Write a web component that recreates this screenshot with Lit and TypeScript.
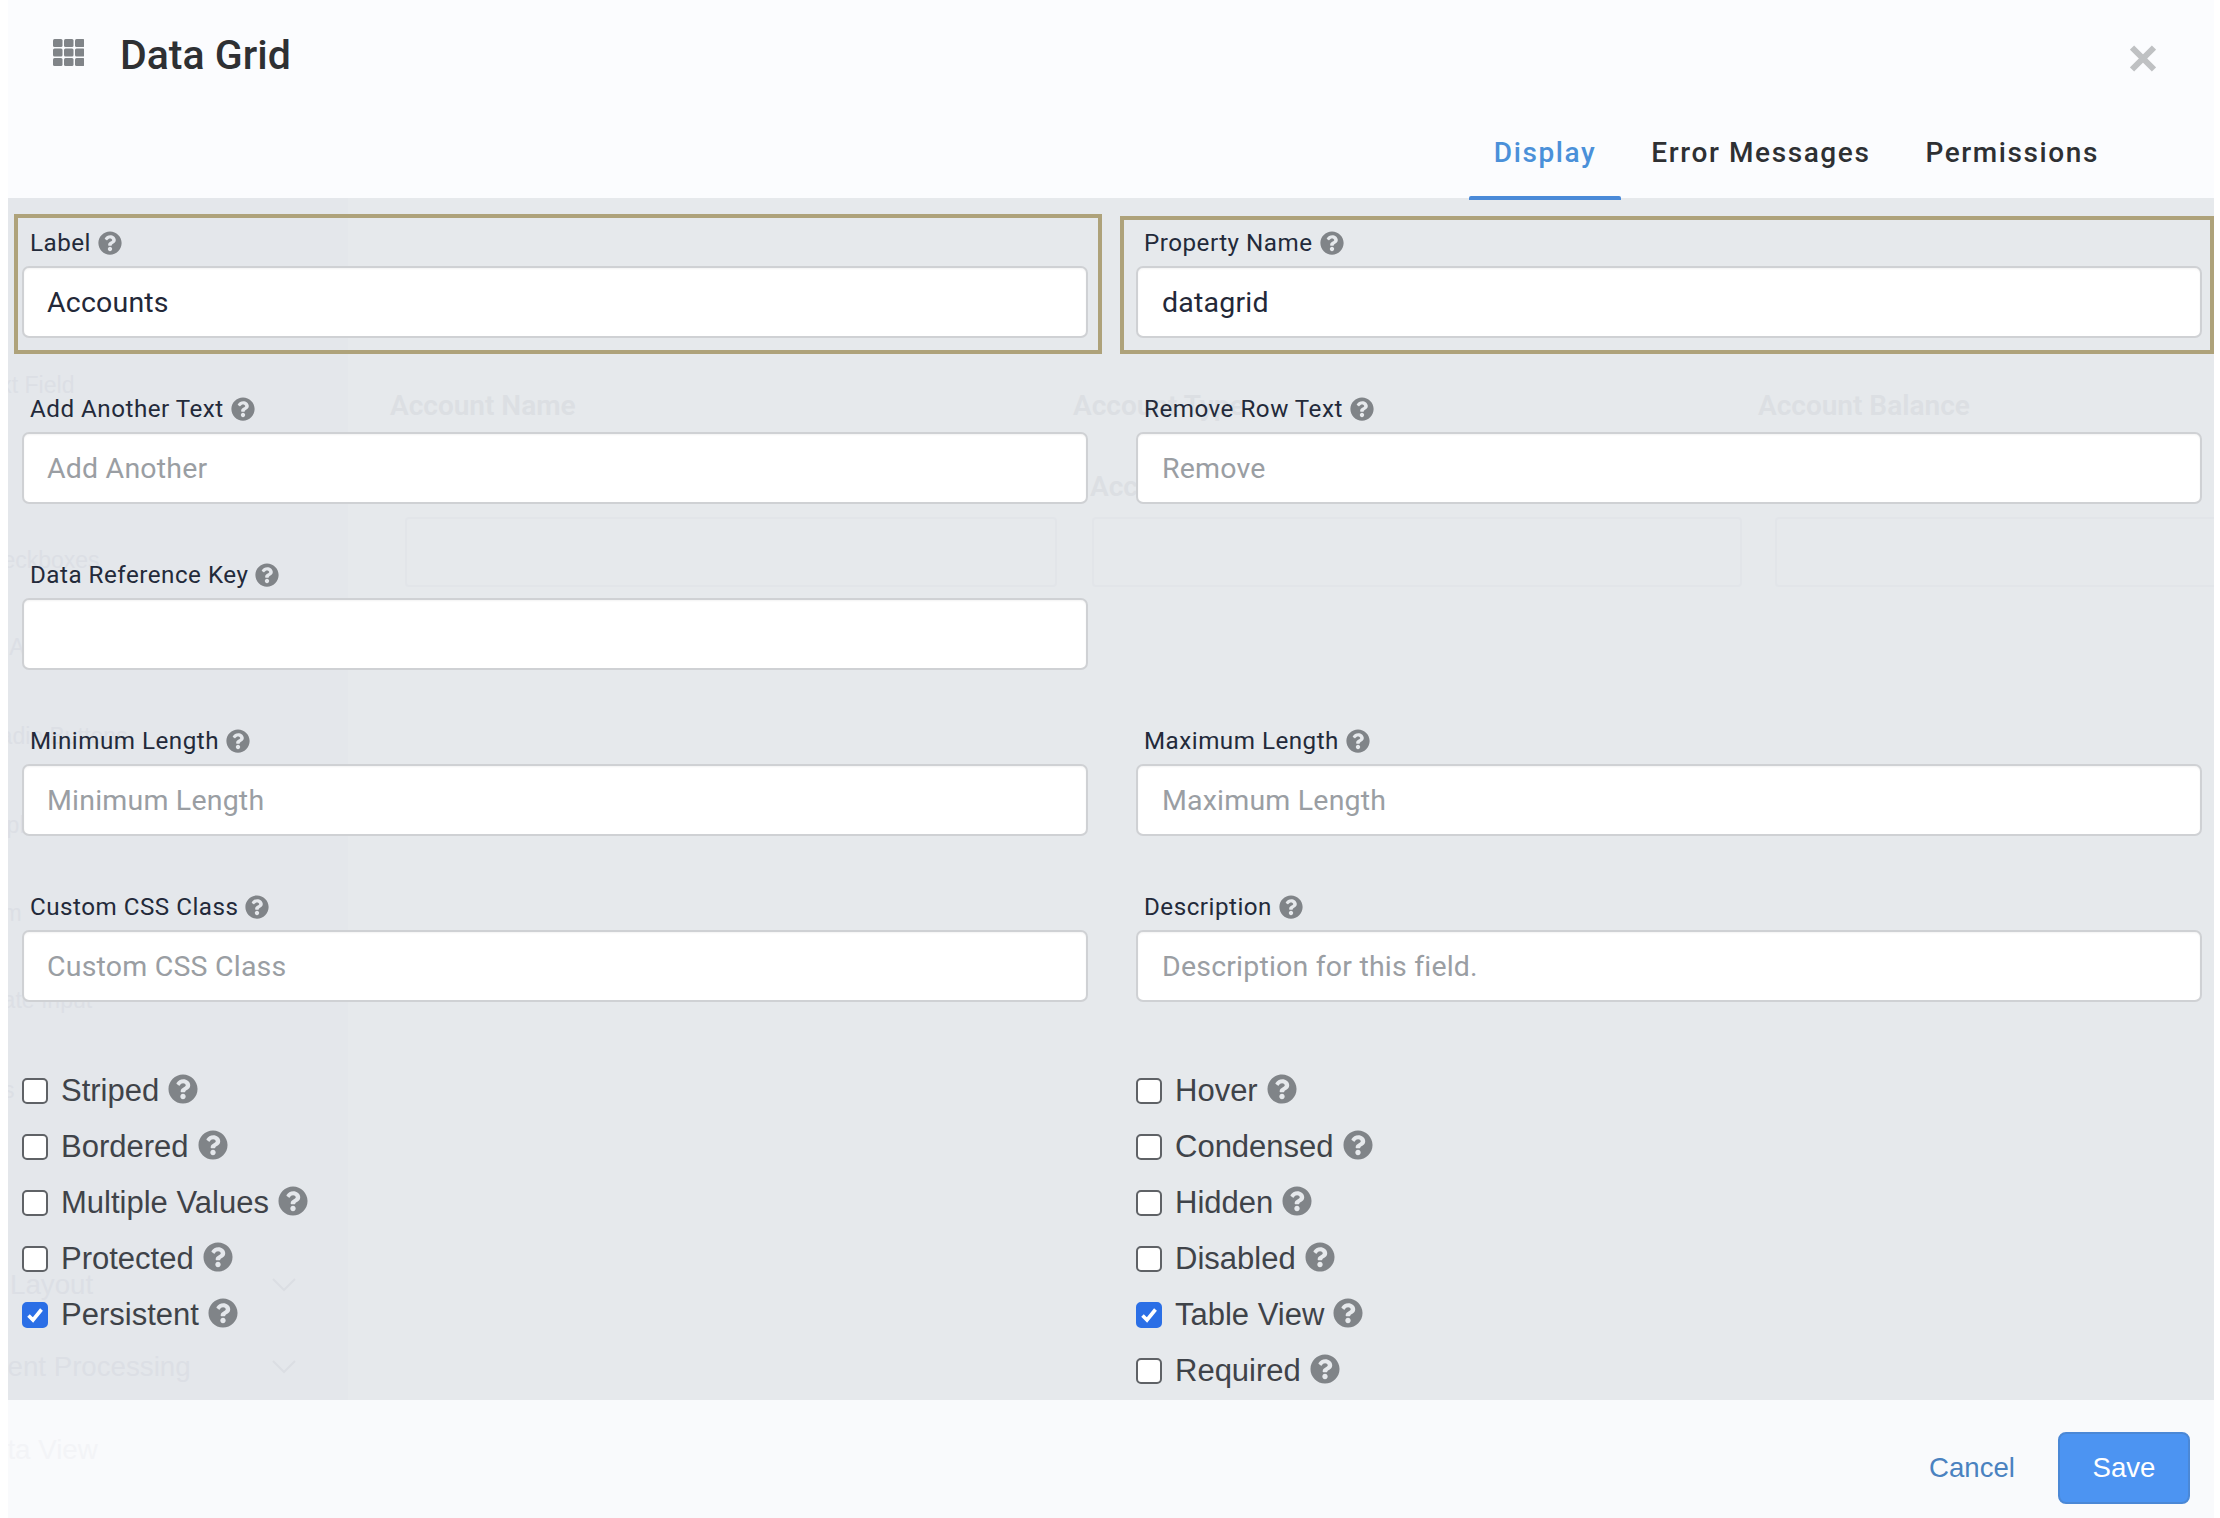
import { LitElement, html, css, svg } from "lit";
import { customElement } from "lit/decorators.js";

const HELP = "M504 256c0 136.997-111.043 248-248 248S8 392.997 8 256C8 119.083 119.043 8 256 8s248 111.083 248 248zM262.655 90c-54.497 0-89.255 22.957-116.549 63.758-3.536 5.286-2.353 12.415 2.715 16.258l34.699 26.31c5.205 3.947 12.621 3.008 16.665-2.122 17.864-22.658 30.113-35.797 57.303-35.797 20.429 0 45.698 13.148 45.698 32.958 0 14.976-12.363 22.667-32.534 33.976C247.128 238.528 216 254.941 216 296v4c0 6.627 5.373 12 12 12h56c6.627 0 12-5.373 12-12v-1.333c0-28.462 83.186-29.647 83.186-106.667 0-58.002-60.165-102-116.531-102zM256 338c-25.365 0-46 20.635-46 46 0 25.364 20.635 46 46 46s46-20.636 46-46c0-25.365-20.635-46-46-46z";

const help = (cls: string) => html`<svg class=${cls} viewBox="0 0 512 512"><path d=${HELP}></path></svg>`;

type Field = { label: string; value?: string; placeholder?: string; hl?: boolean } | null;

const FIELDS: Field[] = [
  { label: "Label", value: "Accounts", hl: true },
  { label: "Property Name", value: "datagrid", hl: true },
  { label: "Add Another Text", placeholder: "Add Another" },
  { label: "Remove Row Text", placeholder: "Remove" },
  { label: "Data Reference Key" },
  null,
  { label: "Minimum Length", placeholder: "Minimum Length" },
  { label: "Maximum Length", placeholder: "Maximum Length" },
  { label: "Custom CSS Class", placeholder: "Custom CSS Class" },
  { label: "Description", placeholder: "Description for this field." },
];

const CHECKS_L: [string, boolean][] = [
  ["Striped", false], ["Bordered", false], ["Multiple Values", false], ["Protected", false], ["Persistent", true],
];
const CHECKS_R: [string, boolean][] = [
  ["Hover", false], ["Condensed", false], ["Hidden", false], ["Disabled", false], ["Table View", true], ["Required", false],
];

// Backdrop page showing faintly through the translucent dialog.
const GHOST_HEAD: [string, number, number][] = [
  ["Account Name", 382, 406],
  ["Account Type", 1065, 406],
  ["Account Balance", 1750, 406],
  ["Account Type", 1082, 487],
];
const GHOST_SIDE: [string, number, number, number, string?][] = [
  ["Text Field", -32, 385, 23],
  ["Checkboxes", -35, 560, 23],
  ["Text Area", -46, 647, 23],
  ["Radio Buttons", -25, 736, 23],
  ["Upload", -18, 825, 23],
  ["Form", -40, 913, 23],
  ["Date Input", -22, 1000, 23],
  ["Tags", -42, 1090, 23],
  ["Survey", -74, 1203, 23],
  ["Layout", 2, 1285, 27.7],
  ["Content Processing", -59, 1367, 27.7],
  ["Data View", -36, 1450, 27.7, "faint"],
];
const GHOST_BOX: [number, number, number, number][] = [
  [397, 517, 652, 70], [1084, 517, 650, 70], [1767, 517, 450, 70],
];

@customElement("app-root")
export class AppRoot extends LitElement {
  static styles = css`
    :host { display: block; width: 2220px; height: 1518px; background: #fff; overflow: hidden; font-family: Roboto, sans-serif; }
    .modal { position: relative; margin-left: 8px; width: 2206px; height: 1518px; display: flex; flex-direction: column; overflow: hidden; }
    .ghost { position: absolute; inset: 0; overflow: hidden; pointer-events: none; }
    .tint { position: absolute; left: 0; top: 198px; width: 340px; height: 1202px; background: rgba(90, 100, 210, 0.012); }
    .gt { position: absolute; font-size: 28px; font-weight: 600; color: #dcdfe3; line-height: 1; transform: translateY(-50%); white-space: nowrap; }
    .gs { position: absolute; font-family: "Liberation Sans", Arial, sans-serif; color: #dcdfe5; line-height: 1; transform: translateY(-50%); white-space: nowrap; }
    .gs.faint { color: #f3f4f7; }
    .gb { position: absolute; border: 2px solid #e2e5e9; border-radius: 4px; box-sizing: border-box; }
    .gc { position: absolute; left: 264px; width: 24px; height: 14px; fill: none; stroke: #dbdee3; stroke-width: 2; }

    header { position: relative; height: 198px; flex: none; background: #fbfcfe; box-sizing: border-box; padding: 0 58px 0 45px; display: flex; flex-direction: column; }
    .head-top { display: flex; align-items: flex-start; position: relative; z-index: 1; height: 132px; }
    .grid-ic { width: 31px; height: 27px; margin-top: 39px; flex: none; fill: #808488; }
    h1 { margin: 31px 0 0 36px; font-size: 41px; line-height: 48px; font-weight: 500; color: #2e3033; }
    .close { margin-left: auto; margin-top: 45px; width: 26px; height: 27px; stroke: #bfc1c3; stroke-width: 6; fill: none; flex: none; }
    .tabs { position: relative; z-index: 1; display: flex; justify-content: flex-end; gap: 5px; margin-right: 32px; height: 66px; padding-top: 2px; }
    .tab { padding: 0 25px; font-size: 28px; font-weight: 500; letter-spacing: 1.6px; color: #2e3033; display: flex; align-items: flex-start; line-height: 40px; position: relative; }
    .tab.on { color: #4a90d9; }
    .tab.on::after { content: ""; position: absolute; left: 0; right: 0; bottom: -2px; height: 4px; background: #4a8ad8; border-radius: 2px 2px 0 0; }

    main { height: 1202px; flex: none; background: #e6e9ec; box-sizing: border-box; padding: 16px 0 0 6px; }
    .form { position: relative; z-index: 1; display: grid; grid-template-columns: 1088px 1094px; column-gap: 18px; row-gap: 26px; }
    .field { border: 4px solid transparent; box-sizing: border-box; height: 140px; padding: 0 10px 0 4px; }
    .field.r { padding: 0 8px 0 12px; }
    .field.hl { border-color: #aea27a; }
    .field.hl.r { margin-top: 2px; height: 138px; }
    .field.hl.r .lab { height: 46px; padding-top: 0; }
    .lab { height: 48px; box-sizing: border-box; padding-top: 2px; display: flex; align-items: center; padding-left: 8px; font-size: 24.2px; letter-spacing: 0.5px; color: #232a3a; }
    .h1 { width: 24px; height: 24px; margin-left: 7px; fill: #808488; flex: none; }
    input { display: block; width: 100%; height: 72px; box-sizing: border-box; border: 2px solid #cfd1d4; border-radius: 7px; background: #fff; box-shadow: inset 0 1px 2px rgba(0, 0, 0, 0.05); padding: 0 23px; font: 400 28.5px Roboto, sans-serif; letter-spacing: 0.2px; color: #232838; outline: none; }
    .field.r input { padding-left: 24px; }
    input::placeholder { color: #9a9ea3; opacity: 1; }

    .checks { position: relative; z-index: 1; display: grid; grid-template-columns: 1088px 1094px; column-gap: 18px; margin-top: 45px; }
    .col { display: flex; flex-direction: column; padding-left: 8px; }
    .col.r { padding-left: 16px; }
    .ck { height: 56px; display: flex; align-items: center; font-family: "Liberation Sans", Arial, sans-serif; font-size: 31px; color: #3f4349; }
    .box { width: 26px; height: 26px; box-sizing: border-box; border: 2px solid #5f6266; border-radius: 5px; background: #fff; margin-right: 13px; flex: none; display: flex; }
    .box.on { background: #2b6fe6; border-color: #2b6fe6; }
    .box svg { width: 100%; height: 100%; fill: none; stroke: #fff; stroke-width: 3.6; }
    .h2 { width: 30px; height: 30px; margin-left: 9px; margin-top: -4px; fill: #808488; flex: none; }

    footer { position: relative; height: 118px; flex: none; background: #f9fafc; display: flex; align-items: flex-start; justify-content: flex-end; padding-right: 24px; box-sizing: border-box; font-family: "Liberation Sans", Arial, sans-serif; font-size: 27.6px; }
    .cancel { position: relative; z-index: 1; margin-top: 32px; margin-right: 43px; height: 72px; line-height: 72px; color: #4a82c0; }
    .save { position: relative; z-index: 1; margin-top: 32px; width: 132px; height: 72px; box-sizing: border-box; border: 2px solid #4b88d6; border-radius: 8px; background: #4c94f2; color: #fff; display: flex; align-items: center; justify-content: center; }
  `;

  private gridIcon() {
    const cells = [];
    for (let r = 0; r < 3; r++) {
      for (let c = 0; c < 3; c++) {
        cells.push(svg`<rect x=${c * 11} y=${r * 9.5} width="9.5" height="8" rx="1.5"></rect>`);
      }
    }
    return html`<svg class="grid-ic" viewBox="0 0 31 27">${cells}</svg>`;
  }

  render() {
    return html`
      <div class="modal">
        <header>
          <div class="head-top">
            ${this.gridIcon()}
            <h1>Data Grid</h1>
            <svg class="close" viewBox="0 0 26 27"><path d="M2 2.500L24 24.500M24 2.500L2 24.500"></path></svg>
          </div>
          <div class="tabs">
            <div class="tab on">Display</div>
            <div class="tab">Error Messages</div>
            <div class="tab">Permissions</div>
          </div>
        </header>
        <main>
          <div class="form">
            ${FIELDS.map((f, i) => {
              const side = i % 2 ? "r" : "l";
              if (!f) return html`<div></div>`;
              return html`<div class="field ${side} ${f.hl ? "hl" : ""}">
                <div class="lab">${f.label}${help("h1")}</div>
                <input .value=${f.value ?? ""} placeholder=${f.placeholder ?? ""} />
              </div>`;
            })}
          </div>
          <div class="checks">
            <div class="col">${CHECKS_L.map((c) => this.check(c))}</div>
            <div class="col r">${CHECKS_R.map((c) => this.check(c))}</div>
          </div>
        </main>
        <footer>
          <div class="cancel">Cancel</div>
          <div class="save">Save</div>
        </footer>
        <div class="ghost">
          <div class="tint"></div>
          ${GHOST_BOX.map(([x, y, w, h]) => html`<div class="gb" style="left:${x}px;top:${y}px;width:${w}px;height:${h}px"></div>`)}
          ${GHOST_HEAD.map(([t, x, y]) => html`<div class="gt" style="left:${x}px;top:${y}px">${t}</div>`)}
          ${GHOST_SIDE.map(([t, x, y, s, c]) => html`<div class="gs ${c ?? ""}" style="left:${x}px;top:${y}px;font-size:${s}px">${t}</div>`)}
          ${[1285, 1367].map((y) => html`<svg class="gc" style="top:${y - 7}px" viewBox="0 0 24 14"><path d="M1 1L12 12L23 1"></path></svg>`)}
        </div>
      </div>
    `;
  }

  private check([name, on]: [string, boolean]) {
    return html`<div class="ck">
      <span class="box ${on ? "on" : ""}">${on ? html`<svg viewBox="0 0 22 22"><path d="M4.500 11.500L9 16L17.500 5.500"></path></svg>` : ""}</span>
      ${name}${help("h2")}
    </div>`;
  }
}
